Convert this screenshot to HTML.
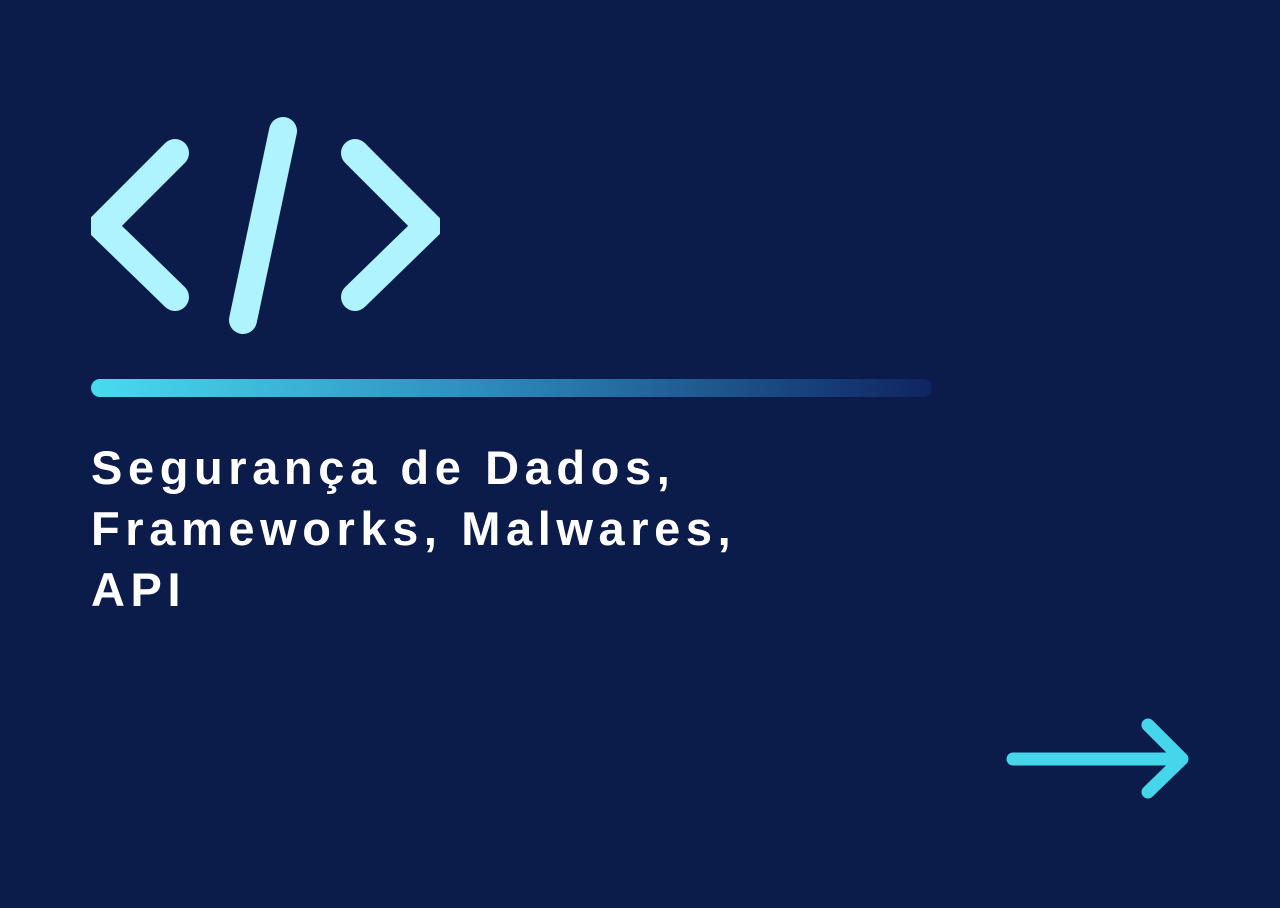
<!DOCTYPE html>
<html><head><meta charset="utf-8"><style>
html,body{margin:0;padding:0}
body{width:1280px;height:908px;background:#0B1B4A;position:relative;overflow:hidden;font-family:"Liberation Sans",sans-serif}
.bar{position:absolute;left:91px;top:379px;width:841px;height:18px;border-radius:9px;background:linear-gradient(90deg,#48DBF0 0%,#2E8FBF 45%,#0F2462 100%)}
.t{position:absolute;left:91px;top:437px;color:#fff;font-weight:bold;font-size:47px;line-height:61px;letter-spacing:5.6px}
</style></head><body>
<svg width="1280" height="908" style="position:absolute;left:0;top:0">
<defs><clipPath id="c"><rect x="91" y="0" width="349" height="908"/></clipPath></defs>
<g clip-path="url(#c)" stroke="#AEF3FE" stroke-width="28" stroke-linecap="round" stroke-linejoin="miter" fill="none">
<polyline points="175,153 102,226 175,297"/>
<polyline points="355,153 428,226 355,297"/>
<line x1="283" y1="131" x2="243" y2="320"/>
</g>
<g stroke="#46D6EC" stroke-width="13" stroke-linecap="round" stroke-linejoin="round" fill="none">
<line x1="1013" y1="759" x2="1180" y2="759"/>
<polyline points="1148,725 1182,759 1148,792"/>
</g>
</svg>
<div class="bar"></div>
<div class="t">Segurança de Dados,<br>Frameworks, Malwares,<br>API</div>
</body></html>
